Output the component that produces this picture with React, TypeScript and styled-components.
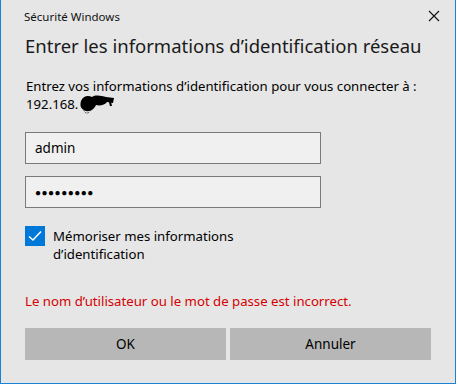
import React from "react"
import styled, { createGlobalStyle } from "styled-components"

const Global = createGlobalStyle`
    html, body {
        margin: 0;
        padding: 0;
        background: #ffffff;
    }
    body {
        font-family: "Noto Sans", "Open Sans", sans-serif;
    }
`

const Dialog = styled.div`
    width: 454px;
    height: 383px;
    box-sizing: content-box;
    background: #e6e6e6;
    border: 1px solid #1883d7;
    border-top: none;
    display: flex;
    flex-direction: column;
    color: #000;
`

const TitleBar = styled.div`
    display: flex;
    align-items: center;
    justify-content: space-between;
    height: 32px;
    padding: 0 15px 0 23px;
`

const TitleText = styled.span`
    font-size: 11.5px;
    color: #111;
`

const Close = styled.span`
    width: 12px;
    height: 12px;
    display: flex;
`

const Content = styled.div`
    display: flex;
    flex-direction: column;
    padding: 0 24px;
`

const Heading = styled.h1`
    margin: 1px 0 0 0;
    font-weight: 400;
    font-size: 18.5px;
    line-height: 26px;
    white-space: nowrap;
    color: #1a1a1a;
`

const Message = styled.p`
    margin: 18px 0 0 1px;
    font-size: 13.2px;
    line-height: 18px;
    white-space: nowrap;
`

const Host = styled.span`
    display: inline-flex;
    align-items: center;
    height: 18px;
`

const Field = styled.div<{ $top: number }>`
    margin-top: ${(p) => p.$top}px;
    width: 285px;
    height: 30px;
    border: 1px solid #7a7a7a;
    background: #f0f0f0;
    display: flex;
    align-items: center;
    padding-left: 9px;
    font-size: 13.5px;
    box-sizing: content-box;
`

const Dots = styled.span`
    font-size: 10px;
    letter-spacing: 0.5px;
`

const CheckRow = styled.label`
    display: flex;
    align-items: flex-start;
    gap: 8px;
    margin-top: 18px;
`

const Box = styled.span`
    width: 20px;
    height: 20px;
    flex: 0 0 20px;
    background: #0078d7;
    display: flex;
    align-items: center;
    justify-content: center;
`

const CheckText = styled.span`
    font-size: 13.2px;
    line-height: 18px;
    margin-top: 1px;
`

const ErrorText = styled.div`
    margin-top: 29px;
    font-size: 13.2px;
    line-height: 18px;
    color: #d40000;
`

const Buttons = styled.div`
    display: grid;
    grid-template-columns: 1fr 1fr;
    gap: 4px;
    margin-top: 18px;
    width: 406px;
`

const Button = styled.div`
    height: 32px;
    background: #b7b7b7;
    display: flex;
    align-items: center;
    justify-content: center;
    font-size: 13.5px;
`

function Scribble() {
    return (
        <svg width="38" height="22" viewBox="0 0 38 22">
            <path d="M3 8 C5 3 10 2 14 4 C18 1 24 3 28 4 L36 5 L35 10 L29 9 C27 12 22 13 18 12 C16 17 10 20 6 17 C2 15 2 12 3 8 Z" fill="#000" />
            <circle cx="9" cy="17" r="3" fill="none" stroke="#000" strokeWidth="1" strokeDasharray="1 1" />
            <path d="M32 9 L33 13" stroke="#000" strokeWidth="2" />
        </svg>
    )
}

export default function App() {
    return (
        <>
            <Global />
            <Dialog>
                <TitleBar>
                    <TitleText>Sécurité Windows</TitleText>
                    <Close>
                        <svg width="12" height="12" viewBox="0 0 12 12">
                            <path d="M1 1 L11 11 M11 1 L1 11" stroke="#111" strokeWidth="1.1" />
                        </svg>
                    </Close>
                </TitleBar>
                <Content>
                    <Heading>Entrer les informations d’identification réseau</Heading>
                    <Message>
                        Entrez vos informations d’identification pour vous connecter à :
                        <br />
                        <Host>192.168.<Scribble /></Host>
                    </Message>
                    <Field $top={19}>admin</Field>
                    <Field $top={12}><Dots>●●●●●●●●●</Dots></Field>
                    <CheckRow>
                        <Box>
                            <svg width="14" height="12" viewBox="0 0 14 12">
                                <path d="M1 6.5 L5 10 L13 1.5" fill="none" stroke="#fff" strokeWidth="1.6" />
                            </svg>
                        </Box>
                        <CheckText>Mémoriser mes informations<br />d’identification</CheckText>
                    </CheckRow>
                    <ErrorText>Le nom d’utilisateur ou le mot de passe est incorrect.</ErrorText>
                    <Buttons>
                        <Button>OK</Button>
                        <Button>Annuler</Button>
                    </Buttons>
                </Content>
            </Dialog>
        </>
    )
}
